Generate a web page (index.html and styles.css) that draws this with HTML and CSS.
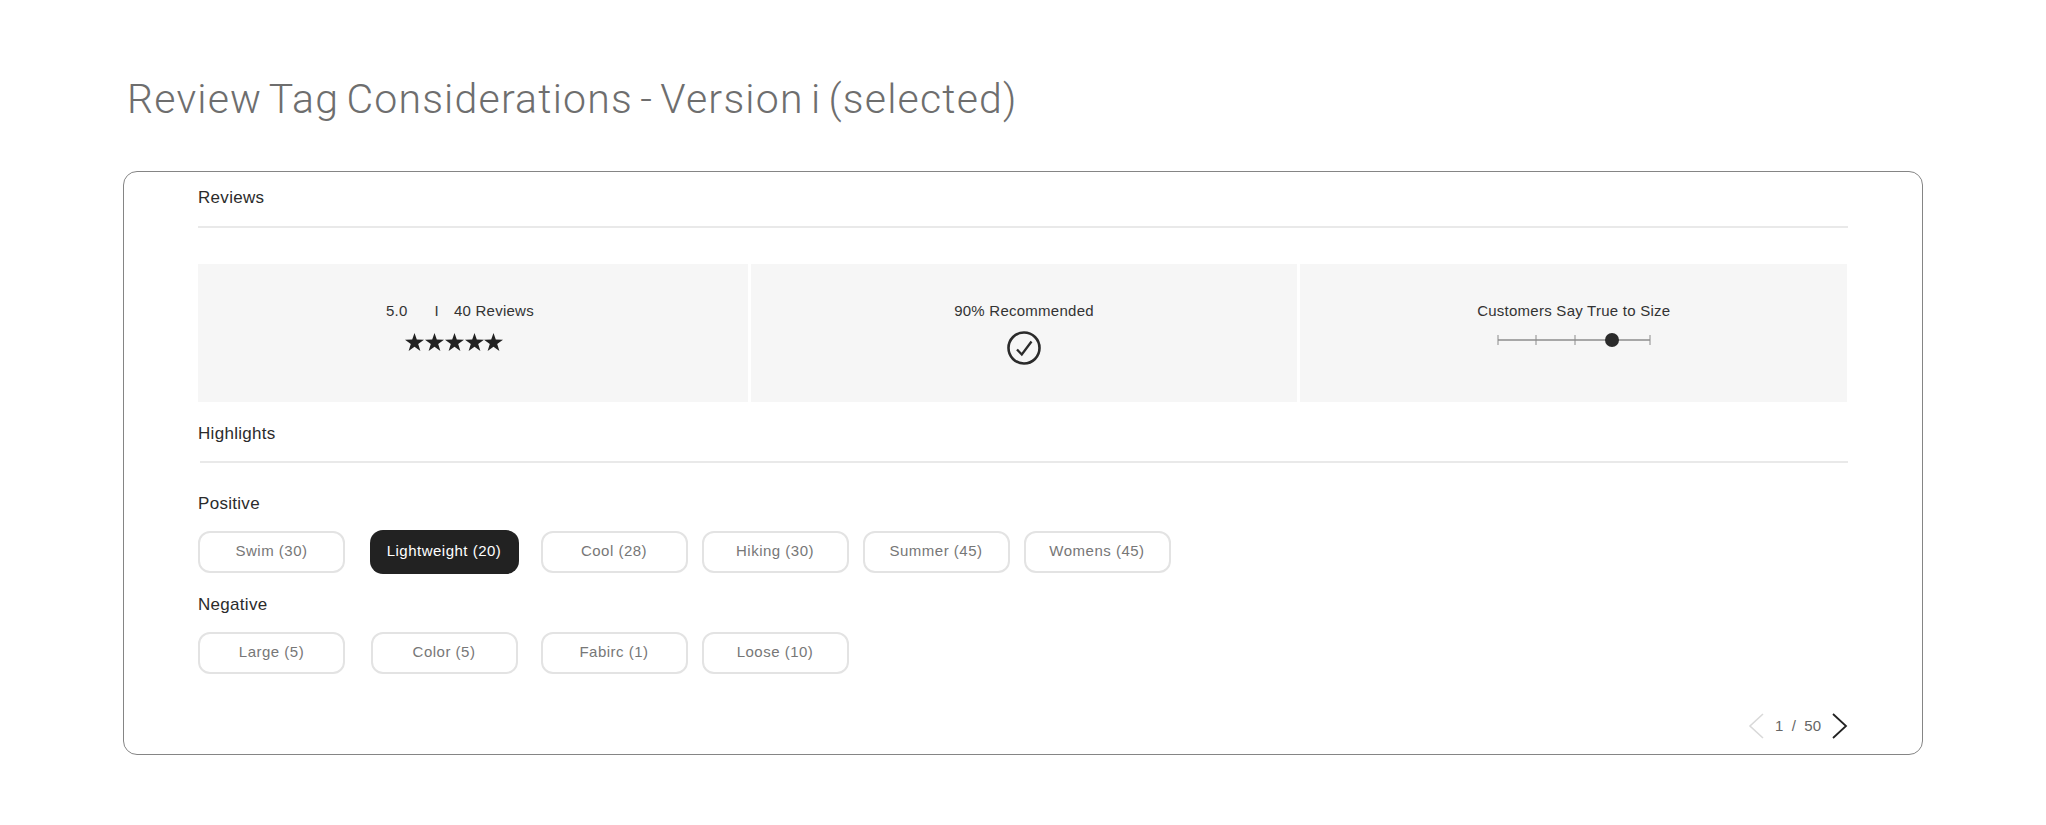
FILE: index.html
```html
<!DOCTYPE html>
<html lang="en">
<head>
<meta charset="utf-8">
<title>Review Tag Considerations</title>
<link rel="stylesheet" href="styles.css">
</head>
<body>
<main class="page">
  <h1 class="title">Review Tag Considerations - Version i (selected)</h1>
  <section class="card">
    <h2 class="heading heading--first">Reviews</h2>
    <div class="rule"></div>
    <div class="panels">
      <div class="panel panel--rating">
        <p class="panel-text"><span>5.0</span><span class="sep">I</span><span>40 Reviews</span></p>
        <svg class="stars" width="98" height="18" viewBox="0 0 98 18" aria-label="5 stars">
          <g fill="#222">
            <polygon points="9.5,0 11.8,6.6 19,6.8 13.2,11 15.4,18 9.5,13.8 3.6,18 5.8,11 0,6.8 7.2,6.6"/>
            <polygon transform="translate(20)" points="9.5,0 11.8,6.6 19,6.8 13.2,11 15.4,18 9.5,13.8 3.6,18 5.8,11 0,6.8 7.2,6.6"/>
            <polygon transform="translate(40)" points="9.5,0 11.8,6.6 19,6.8 13.2,11 15.4,18 9.5,13.8 3.6,18 5.8,11 0,6.8 7.2,6.6"/>
            <polygon transform="translate(60)" points="9.5,0 11.8,6.6 19,6.8 13.2,11 15.4,18 9.5,13.8 3.6,18 5.8,11 0,6.8 7.2,6.6"/>
            <polygon transform="translate(79)" points="9.5,0 11.8,6.6 19,6.8 13.2,11 15.4,18 9.5,13.8 3.6,18 5.8,11 0,6.8 7.2,6.6"/>
          </g>
        </svg>
      </div>
      <div class="panel">
        <p class="panel-text">90% Recommended</p>
        <svg class="check" width="34" height="34" viewBox="0 0 34 34" aria-label="Recommended">
          <circle cx="17" cy="17" r="15.5" fill="none" stroke="#2b2b2b" stroke-width="2.6"/>
          <path d="M10 18.5 L14.8 23.5 L24.5 10.5" fill="none" stroke="#2b2b2b" stroke-width="2.3"/>
        </svg>
      </div>
      <div class="panel">
        <p class="panel-text">Customers Say True to Size</p>
        <svg class="slider" width="154" height="14" viewBox="0 0 154 14" aria-label="True to size">
          <g stroke="#8c8c8c" fill="none">
            <path d="M1 7 H153" stroke-width="1.5"/>
            <path d="M1 2 V12 M39 2 V12 M78 2 V12 M153 2 V12" stroke-width="1"/>
          </g>
          <circle cx="115" cy="7" r="7" fill="#2b2b2b"/>
        </svg>
      </div>
    </div>
    <h2 class="heading heading--second">Highlights</h2>
    <div class="rule rule--inset"></div>
    <h3 class="heading heading--group-first">Positive</h3>
    <div class="chips">
      <span class="chip chip--first">Swim (30)</span>
      <span class="chip chip--second chip--active">Lightweight (20)</span>
      <span class="chip">Cool (28)</span>
      <span class="chip">Hiking (30)</span>
      <span class="chip">Summer (45)</span>
      <span class="chip">Womens (45)</span>
    </div>
    <h3 class="heading heading--group">Negative</h3>
    <div class="chips">
      <span class="chip chip--first">Large (5)</span>
      <span class="chip chip--second">Color (5)</span>
      <span class="chip">Fabirc (1)</span>
      <span class="chip">Loose (10)</span>
    </div>
    <nav class="pager">
      <svg width="16" height="26" viewBox="0 0 16 26" aria-label="Previous"><path d="M15 1 L2 13 L15 25" fill="none" stroke="#d9d9d9" stroke-width="1.6"/></svg>
      <span class="pager-text"><span>1</span><span>/</span><span>50</span></span>
      <svg width="16" height="26" viewBox="0 0 16 26" aria-label="Next"><path d="M1 1 L14 13 L1 25" fill="none" stroke="#222" stroke-width="1.8"/></svg>
    </nav>
  </section>
</main>
</body>
</html>
```
FILE: styles.css
```css
* { box-sizing: border-box; }
html, body { margin: 0; padding: 0; background: #fff; }
body { font-family: "Liberation Sans", Arial, sans-serif; }
.page { padding: 74px 123px 0; }
.title {
  margin: 0 0 47px 4px;
  font-family: Roboto, "Liberation Sans", sans-serif;
  font-size: 41px;
  line-height: 50px;
  font-weight: 300;
  letter-spacing: 1.2px;
  word-spacing: -4px;
  color: #6e6e6e;
}
.card {
  border: 1.5px solid #858585;
  border-radius: 14px;
  padding: 16px 74.5px 15px 74px;
  height: 584px;
}
.heading {
  margin: 0;
  font-size: 17px;
  line-height: 20px;
  font-weight: 400;
  color: #2b2b2b;
  letter-spacing: 0.3px;
}
.heading--second { margin-top: 22px; }
.heading--group-first { margin-top: 31px; }
.heading--group { margin-top: 22.5px; }
.rule { height: 2px; margin-top: 17.5px; background: #e9e9e9; }
.rule--inset { margin: 17.5px 0 0 2px; }
.panels {
  display: grid;
  grid-template-columns: 549.5fr 546fr 547fr;
  column-gap: 3px;
  margin-top: 36px;
}
.panel {
  height: 138px;
  padding-top: 37px;
  background: #f6f6f6;
  display: flex;
  flex-direction: column;
  align-items: center;
}
.panel--rating { padding-right: 26px; }
.panel-text {
  margin: 0;
  font-size: 15px;
  line-height: 20px;
  letter-spacing: 0.25px;
  color: #333;
}
.sep { margin: 0 15px 0 27px; }
.stars { margin: 12px 12px 0 0; }
.check { margin-top: 10px; }
.slider { margin-top: 12px; }
.chips { display: flex; column-gap: 14px; margin-top: 16.5px; }
.chip {
  width: 147px;
  height: 42px;
  padding-bottom: 2px;
  border: 2px solid #e3e3e3;
  border-radius: 12px;
  display: flex;
  align-items: center;
  justify-content: center;
  font-size: 15px;
  letter-spacing: 0.5px;
  color: #777;
}
.chip--first { margin-right: 11.5px; }
.chip--second { margin-right: 9px; }
.chip--active {
  background: #222;
  border-color: #222;
  color: #fff;
  box-shadow: 0 0 0 1px #222;
}
.pager {
  display: flex;
  align-items: center;
  justify-content: flex-end;
  margin-top: 39px;
}
.pager-text {
  display: flex;
  column-gap: 8px;
  margin: 0 10px 0 11px;
  font-size: 15px;
  letter-spacing: 0.3px;
  color: #666;
}
```
